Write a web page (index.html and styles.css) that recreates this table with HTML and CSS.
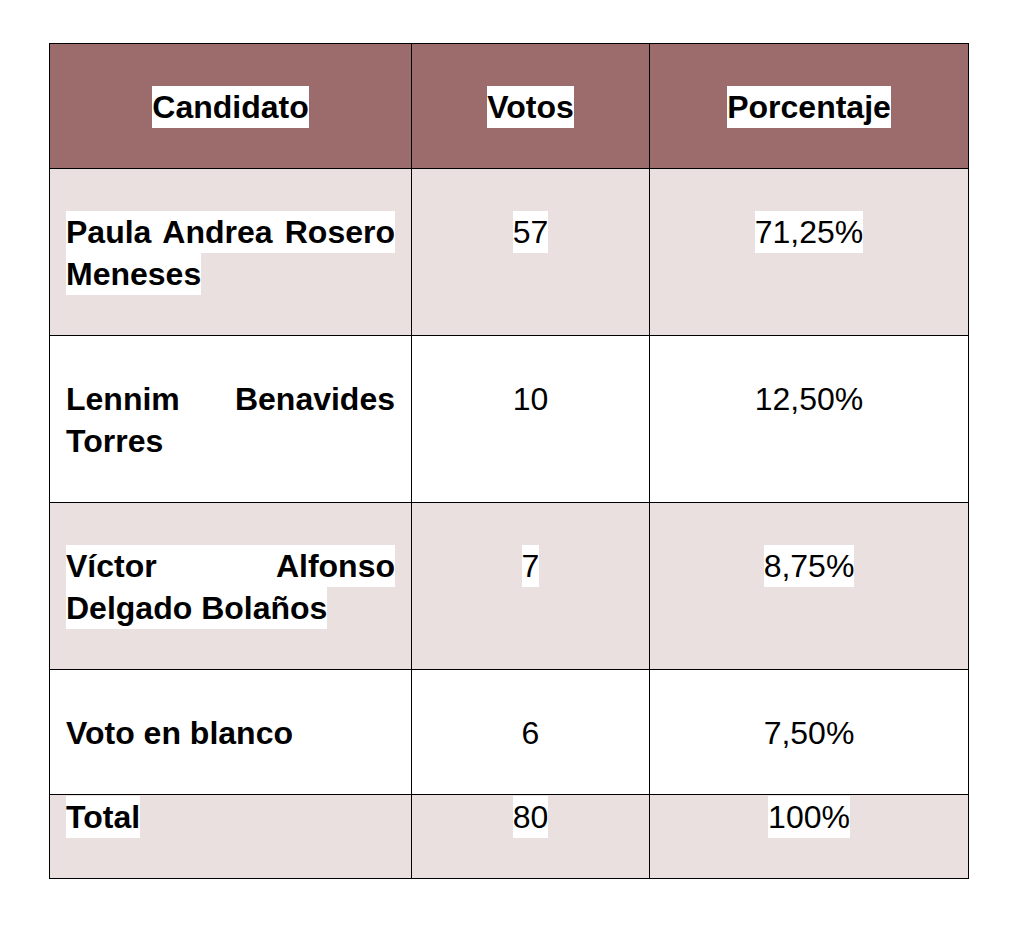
FILE: index.html
```html
<!DOCTYPE html>
<html lang="es">
<head>
<meta charset="utf-8">
<title>Resultados</title>
<link rel="stylesheet" href="styles.css">
</head>
<body>
<div class="page">
  <table class="results">
    <colgroup>
      <col class="c1"><col class="c2"><col class="c3">
    </colgroup>
    <thead>
      <tr class="head">
        <th><span class="hl">Candidato</span></th>
        <th><span class="hl">Votos</span></th>
        <th><span class="hl">Porcentaje</span></th>
      </tr>
    </thead>
    <tbody>
      <tr class="tint">
        <td class="name"><span class="hl">Paula Andrea Rosero Meneses</span></td>
        <td class="num"><span class="hl">57</span></td>
        <td class="num"><span class="hl">71,25%</span></td>
      </tr>
      <tr>
        <td class="name"><span>Lennim Benavides Torres</span></td>
        <td class="num"><span>10</span></td>
        <td class="num"><span>12,50%</span></td>
      </tr>
      <tr class="tint">
        <td class="name"><span class="hl">Víctor Alfonso Delgado Bolaños</span></td>
        <td class="num"><span class="hl">7</span></td>
        <td class="num"><span class="hl">8,75%</span></td>
      </tr>
      <tr>
        <td class="name"><span>Voto en blanco</span></td>
        <td class="num"><span>6</span></td>
        <td class="num"><span>7,50%</span></td>
      </tr>
      <tr class="tint total">
        <td class="name"><span class="hl">Total</span></td>
        <td class="num"><span class="hl">80</span></td>
        <td class="num"><span class="hl">100%</span></td>
      </tr>
    </tbody>
  </table>
</div>
</body>
</html>
```

FILE: styles.css
```css
html, body {
  margin: 0;
  padding: 0;
  background: #ffffff;
}

.page {
  padding: 43px 0 0 49px;
}

.results {
  border-collapse: collapse;
  width: 919px;
  table-layout: fixed;
  font-family: "Liberation Sans", Arial, sans-serif;
  font-size: 32px;
  line-height: 42px;
  color: #000;
}

.c1 { width: 362px; }
.c2 { width: 238px; }
.c3 { width: 319px; }

.results th,
.results td {
  border: 1px solid #000;
  vertical-align: top;
  padding: 42px 16px 40px 16px;
}

.results th {
  font-weight: bold;
  text-align: center;
}

.head {
  background: #9c6c6c;
}

.tint {
  background: #eae0e0;
}

.name {
  font-weight: bold;
  text-align: justify;
}

.num {
  text-align: center;
  font-weight: normal;
}

.hl {
  background: #ffffff;
  padding: 3px 0;
}

.results .total td {
  padding-top: 1px;
  padding-bottom: 40px;
}
```
